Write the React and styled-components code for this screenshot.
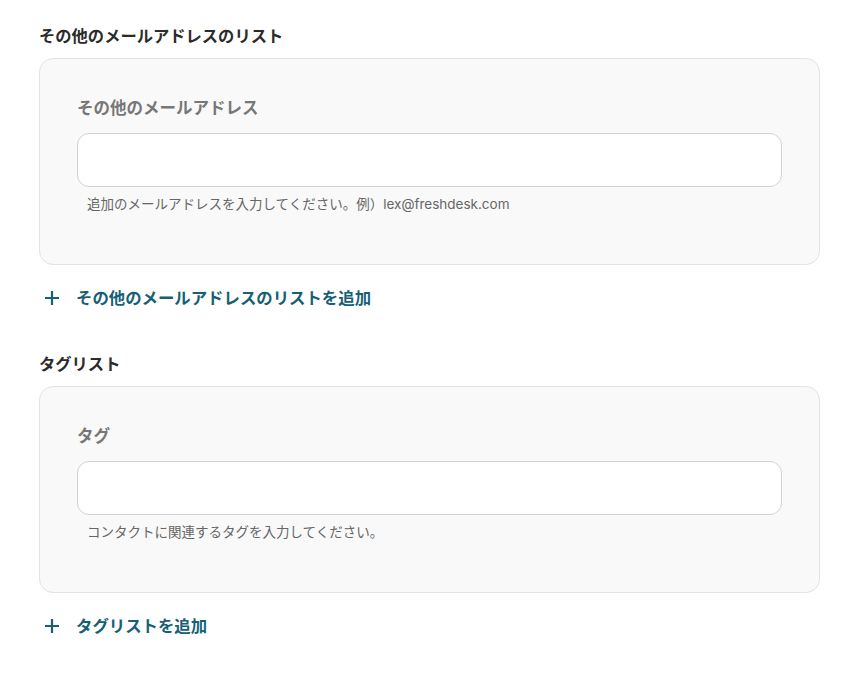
import React from 'react';
import styled, { createGlobalStyle } from 'styled-components';

const GlobalStyle = createGlobalStyle`
  html, body {
    margin: 0;
    padding: 0;
    background: #ffffff;
  }
  body {
    font-family: "Inter", "Noto Sans CJK JP", sans-serif;
  }
`;

export const Page = styled.div`
  width: 855px;
  padding: 24px 35px 0 39px;
  box-sizing: border-box;
`;

export const Section = styled.section`
  display: flex;
  flex-direction: column;
  margin-bottom: 42px;
`;

export const SectionTitle = styled.h2`
  margin: 0 0 10px;
  font-size: 16.3px;
  font-weight: 700;
  line-height: 24px;
  color: #2b2b2b;
`;

export const Card = styled.div`
  background: #f9f9f9;
  border: 1px solid #e3e3e3;
  border-radius: 14px;
  padding: 37px 37px 50px;
  display: flex;
  flex-direction: column;
`;

export const FieldLabel = styled.label`
  font-size: 16.5px;
  font-weight: 700;
  line-height: 24px;
  color: #777777;
  margin-bottom: 13px;
`;

export const TextInput = styled.input`
  height: 54px;
  box-sizing: border-box;
  border: 1px solid #cfd2d8;
  border-radius: 12px;
  background: #ffffff;
  padding: 0 16px;
  font-size: 14px;
  font-family: inherit;
  outline: none;
`;

export const HelpText = styled.p`
  margin: 7px 0 0 10px;
  font-size: 13.5px;
  line-height: 20px;
  color: #666666;
`;

export const AddButton = styled.button`
  display: flex;
  align-items: center;
  gap: 15px;
  margin-top: 21px;
  padding: 0 0 0 4px;
  border: none;
  background: none;
  cursor: pointer;
  font-family: inherit;
  font-size: 16.4px;
  font-weight: 700;
  line-height: 24px;
  color: #175f75;
  align-self: flex-start;
`;

const PlusIcon = () => (
  <svg width="18" height="18" viewBox="0 0 18 18" fill="none">
    <path d="M9 2v14M2 9h14" stroke="#175f75" strokeWidth="2.2" strokeLinecap="butt" />
  </svg>
);

const ListSection = ({ title, label, help, addText }) => (
  <Section>
    <SectionTitle>{title}</SectionTitle>
    <Card>
      <FieldLabel>{label}</FieldLabel>
      <TextInput type="text" />
      <HelpText>{help}</HelpText>
    </Card>
    <AddButton>
      <PlusIcon />
      {addText}
    </AddButton>
  </Section>
);

export default function App() {
  return (
    <>
      <GlobalStyle />
      <Page>
        <ListSection
          title="その他のメールアドレスのリスト"
          label="その他のメールアドレス"
          help="追加のメールアドレスを入力してください。例）lex@freshdesk.com"
          addText="その他のメールアドレスのリストを追加"
        />
        <ListSection
          title="タグリスト"
          label="タグ"
          help="コンタクトに関連するタグを入力してください。"
          addText="タグリストを追加"
        />
      </Page>
    </>
  );
}
